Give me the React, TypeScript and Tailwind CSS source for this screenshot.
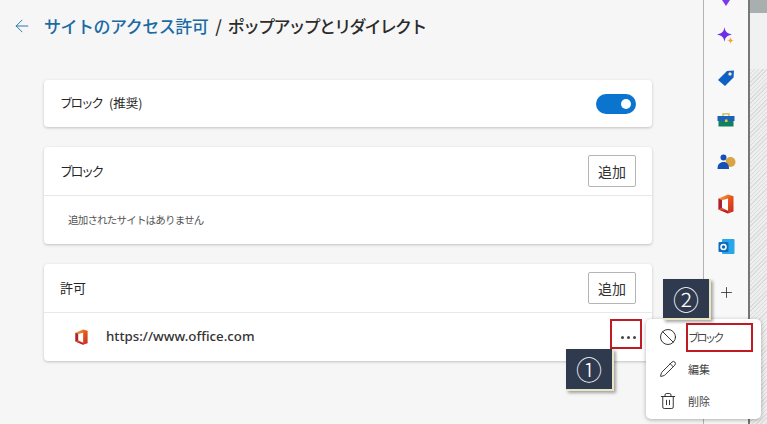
import { Ban, Pencil, Trash2, Plus, ArrowLeft } from "lucide-react";

const jp = "font-['Noto_Sans_CJK_JP','Noto_Sans',sans-serif]";

function OfficeIcon({ size }: { size: number }) {
  return (
    <svg width={size} height={size * 1.25} viewBox="0 0 16 20">
      <defs>
        <linearGradient id={`off${size}`} x1="0" y1="0" x2="1" y2="1">
          <stop offset="0" stopColor="#f7b23b" />
          <stop offset="0.5" stopColor="#e8541f" />
          <stop offset="1" stopColor="#c42a1f" />
        </linearGradient>
      </defs>
      <path d="M0.500 4.500 10 0.500 15.500 2.300V17.500L10 19.500 0.500 15.500z" fill={`url(#off${size})`} />
      <path d="M0.500 4.500 4 6.300V13.800L0.500 15.500z" fill="#a91f3c" />
      <path d="M0.500 15.500 10 16.800V19.500z" fill="#b5233a" />
      <path d="M4 6.300 10 4.500V16.800L4 13.800z" fill="#fff" />
    </svg>
  );
}

function AddButton() {
  return (
    <button className={`w-[48px] h-[32px] border border-[#b5b5b5] rounded-[2px] bg-white text-[14px] text-[#333] ${jp}`}>
      追加
    </button>
  );
}

function Callout({ n, className }: { n: string; className: string }) {
  return (
    <div
      className={`absolute flex items-center justify-center bg-[#2f3a4f] text-white text-[26px] font-light leading-none border-r-2 border-b-2 border-[#e9e6c4] shadow-[2px_2px_3px_rgba(0,0,0,0.35)] ${jp} ${className}`}
    >
      {n}
    </div>
  );
}

function Slot({ children }: { children: React.ReactNode }) {
  return <div className="h-[42px] flex items-center justify-center">{children}</div>;
}

export default function App() {
  return (
    <div className={`relative flex w-[767px] h-[424px] overflow-hidden text-[#262626] ${jp}`}>
      <div className="w-[703px] shrink-0 bg-[#f6f6f6] pl-[44px] pr-[51px] pt-[2px]">
        <div className="flex items-center h-[48px] -ml-[32px]">
          <ArrowLeft size={20} strokeWidth={1.1} className="text-[#1b6ea8] mr-[12px]" />
          <span className="text-[17px] font-medium tracking-[-0.5px] text-[#1a6ba3]">サイトのアクセス許可</span>
          <span className="text-[17px] font-medium text-[#2b2b2b] ml-[7px] mr-[6px]">/</span>
          <span className="text-[17px] font-medium tracking-[-1.800px] text-[#2b2b2b]">ポップアップとリダイレクト</span>
        </div>

        <div className="mt-[30px] flex flex-col gap-[20px]">
          <div className="h-[47px] bg-white rounded-[4px] shadow-[0_1px_3px_rgba(0,0,0,0.22)] flex items-center justify-between pl-[16px] pr-[16px]">
            <span className="flex text-[12.500px]">
              <span className="tracking-[-2px]">ブロック</span>
              <span className="ml-[7px]">(推奨)</span>
            </span>
            <div className="w-[40px] h-[20px] rounded-full bg-[#0b74cf] flex items-center justify-end pr-[5px]">
              <div className="w-[10px] h-[10px] rounded-full bg-white" />
            </div>
          </div>

          <div className="h-[97px] bg-white rounded-[4px] shadow-[0_1px_3px_rgba(0,0,0,0.22)]">
            <div className="h-[49px] flex items-center justify-between px-[16px] border-b border-[#e8e8e8]">
              <span className="text-[13px] tracking-[-2.500px]">ブロック</span>
              <AddButton />
            </div>
            <div className="h-[48px] flex items-center pl-[24px] text-[10.500px] tracking-[-0.800px] text-[#555]">追加されたサイトはありません</div>
          </div>

          <div className="h-[97px] bg-white rounded-[4px] shadow-[0_1px_3px_rgba(0,0,0,0.22)]">
            <div className="h-[49px] flex items-center justify-between px-[16px] border-b border-[#e8e8e8]">
              <span className="text-[13px]">許可</span>
              <AddButton />
            </div>
            <div className="h-[48px] flex items-center pl-[31px] pr-[8px]">
              <OfficeIcon size={13} />
              <span className="ml-[18px] text-[13.300px] font-['Noto_Sans',sans-serif] font-medium text-[#333]">https://www.office.com</span>
              <span className="ml-auto w-[32px] h-[32px] flex items-center justify-center gap-[3px]">
                <i className="w-[3px] h-[3px] rounded-full bg-[#444]" />
                <i className="w-[3px] h-[3px] rounded-full bg-[#444]" />
                <i className="w-[3px] h-[3px] rounded-full bg-[#444]" />
              </span>
            </div>
          </div>
        </div>
      </div>

      <div className="w-[47px] shrink-0 bg-[#f8f8f8] border-l border-[#b4b4b4] border-r-2 border-r-[#777] flex flex-col items-center">
        <svg width="12" height="6" viewBox="0 0 12 6" className="mb-[9px]">
          <path d="M6 6 2 0h8z" fill="#7c3aed" />
        </svg>
        <Slot>
          <svg width="18" height="19" viewBox="0 0 18 19">
            <path d="M7.500 0c.6 4.600 2.500 6.500 7.500 7.500-5 1-6.900 2.900-7.500 7.500C6.900 10.400 5 8.500 0 7.500 5 6.500 6.900 4.600 7.500 0z" fill="#6d2ee8" />
            <path d="M13.500 10c.3 2.300 1.200 3.200 3.500 3.500-2.300.3-3.200 1.200-3.500 3.500-.3-2.300-1.200-3.200-3.500-3.500 2.300-.3 3.200-1.200 3.500-3.500z" fill="#f5a524" />
          </svg>
        </Slot>
        <Slot>
          <svg width="18" height="18" viewBox="0 0 18 18">
            <path d="M1 11 10 2l7-.5-.5 7L8 17z" fill="#0f5fc4" />
            <circle cx="13" cy="5" r="1.700" fill="#f3e9a8" />
          </svg>
        </Slot>
        <Slot>
          <svg width="18" height="14" viewBox="0 0 18 14">
            <path d="M6 3V.800h6V3" fill="none" stroke="#c9b24a" strokeWidth="1.300" />
            <rect x="0.500" y="3" width="17" height="5" fill="#1c62b9" />
            <rect x="1.500" y="8" width="15" height="5.500" fill="#11805f" />
            <rect x="8" y="6.500" width="2.500" height="2.500" fill="#e8c94a" />
          </svg>
        </Slot>
        <Slot>
          <svg width="19" height="16" viewBox="0 0 19 16">
            <circle cx="13.500" cy="8" r="5" fill="#d9a441" />
            <circle cx="6.500" cy="3.500" r="3" fill="#1450b8" />
            <path d="M.500 15c0-5 2.500-7 6-7s5.500 2 5.500 7z" fill="#1450b8" />
          </svg>
        </Slot>
        <Slot><OfficeIcon size={16} /></Slot>
        <Slot>
          <svg width="17" height="17" viewBox="0 0 17 17">
            <rect x="4" y="1" width="12.500" height="15" rx="1" fill="#28a8ea" />
            <rect x="0.500" y="4" width="10" height="10" rx="1" fill="#0f6cbd" />
            <circle cx="5.500" cy="9" r="2.500" fill="none" stroke="#fff" strokeWidth="1.500" />
          </svg>
        </Slot>
        <Plus size={17} strokeWidth={1.1} className="mt-[17px] text-[#222]" />
      </div>

      <div className="flex-1 flex flex-col">
        <div className="h-[13px] bg-[#a9afae]" />
        <div className="h-[56px] bg-[#f1f1f1]" />
        <div className="flex-1 bg-[repeating-linear-gradient(135deg,#dcdcdc_0px,#dcdcdc_1px,#eeeeee_1px,#eeeeee_3px)]" />
      </div>

      <div className="absolute left-[610px] top-[319px] w-[32px] h-[30px] border-2 border-[#c01a24]" />

      <div className="absolute left-[646px] top-[319px] w-[115px] h-[100px] bg-white rounded-[5px] shadow-[0_1px_4px_rgba(0,0,0,0.3)] flex flex-col text-[#444] pt-[2px]">
        {[
          { label: "ブロック", cls: "tracking-[-2.500px]", icon: <Ban size={18} strokeWidth={1.2} /> },
          { label: "編集", cls: "", icon: <Pencil size={18} strokeWidth={1.2} /> },
          { label: "削除", cls: "", icon: <Trash2 size={18} strokeWidth={1.2} /> },
        ].map((m) => (
          <div key={m.label} className="h-[32px] flex items-center pl-[13px] gap-[11px]">
            <span className="text-[#222]">{m.icon}</span>
            <span className={`text-[11px] ${m.cls}`}>{m.label}</span>
          </div>
        ))}
      </div>

      <div className="absolute left-[686px] top-[323px] w-[67px] h-[29px] border-2 border-[#c01a24]" />

      <Callout n="②" className="left-[663px] top-[279px] w-[48px] h-[41px]" />
      <Callout n="①" className="left-[566px] top-[349px] w-[48px] h-[42px]" />
    </div>
  );
}
